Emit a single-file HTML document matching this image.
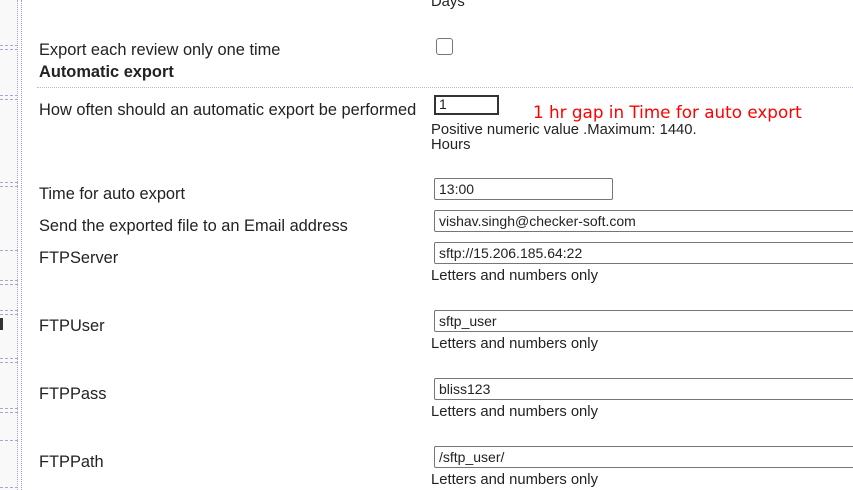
<!DOCTYPE html>
<html><head><style>
body{margin:0;width:853px;height:490px;overflow:hidden;background:#fff;position:relative;font-family:"Liberation Sans",Arial,sans-serif;color:#222}
.a{position:absolute;white-space:nowrap}
.l{font-size:16.4px;left:39px}
.h{font-size:14.8px;left:431px}
.i{position:absolute;box-sizing:border-box;border:1px solid #767676;border-radius:2px;height:22px;font-size:14px;padding:2px 4px;line-height:16px}
.hd{position:absolute;left:0;width:18px;border-top:1px dashed #a6a9cc}
</style></head><body>
<div style="position:absolute;left:0;top:0;width:17px;height:490px;background:#f9f9f9;border-right:1px dotted #a6a9cc"></div>
<div style="position:absolute;left:21px;top:0;height:490px;border-left:1px dotted #9a9cc0"></div>
<div class="hd" style="top:45px"></div><div class="hd" style="top:49px"></div>
<div class="hd" style="top:95px"></div><div class="hd" style="top:99px"></div>
<div class="hd" style="top:182px"></div><div class="hd" style="top:186px"></div>
<div class="hd" style="top:250px"></div><div class="hd" style="top:280px"></div><div class="hd" style="top:284px"></div>
<div class="hd" style="top:310px"></div><div class="hd" style="top:314px"></div>
<div class="hd" style="top:358px"></div><div class="hd" style="top:362px"></div>
<div class="hd" style="top:408px"></div><div class="hd" style="top:412px"></div>
<div class="hd" style="top:440px"></div><div class="hd" style="top:487px"></div>
<div class="a" style="left:0;top:318px;width:3px;height:12px;background:#333"></div>
<div class="a h" style="top:-6px">Days</div>
<div class="a l" style="top:41px">Export each review only one time</div>
<div class="a" style="left:436px;top:38px;width:17px;height:17px;border:1px solid #767676;border-radius:3px;box-sizing:border-box"></div>
<div class="a l" style="top:63px;font-weight:bold">Automatic export</div>
<div class="a" style="left:37px;top:87px;width:816px;border-top:1px dotted #b8bad6"></div>
<div class="a l" style="top:101px">How often should an automatic export be performed</div>
<div class="i" style="left:434px;top:95px;width:65px;height:20px;border:2px solid #333;border-radius:0;padding:0 3px;line-height:15px">1</div>
<div class="a" style="left:533px;top:102px;color:#f00;font-family:'DejaVu Sans','Liberation Sans',sans-serif;font-size:16.8px">1 hr gap in Time for auto export</div>
<div class="a h" style="top:122px">Positive numeric value .Maximum: 1440.</div>
<div class="a h" style="top:137px">Hours</div>
<div class="a l" style="top:185px">Time for auto export</div>
<div class="i" style="left:434px;top:178px;width:179px">13:00</div>
<div class="a l" style="top:217px">Send the exported file to an Email address</div>
<div class="i" style="left:434px;top:210px;width:430px">vishav.singh@checker-soft.com</div>
<div class="a l" style="top:249px">FTPServer</div>
<div class="i" style="left:434px;top:242px;width:430px">sftp://15.206.185.64:22</div>
<div class="a h" style="top:268px">Letters and numbers only</div>
<div class="a l" style="top:317px">FTPUser</div>
<div class="i" style="left:434px;top:310px;width:430px">sftp_user</div>
<div class="a h" style="top:336px">Letters and numbers only</div>
<div class="a l" style="top:385px">FTPPass</div>
<div class="i" style="left:434px;top:378px;width:430px">bliss123</div>
<div class="a h" style="top:404px">Letters and numbers only</div>
<div class="a l" style="top:453px">FTPPath</div>
<div class="i" style="left:434px;top:446px;width:430px">/sftp_user/</div>
<div class="a h" style="top:472px">Letters and numbers only</div>
</body></html>
